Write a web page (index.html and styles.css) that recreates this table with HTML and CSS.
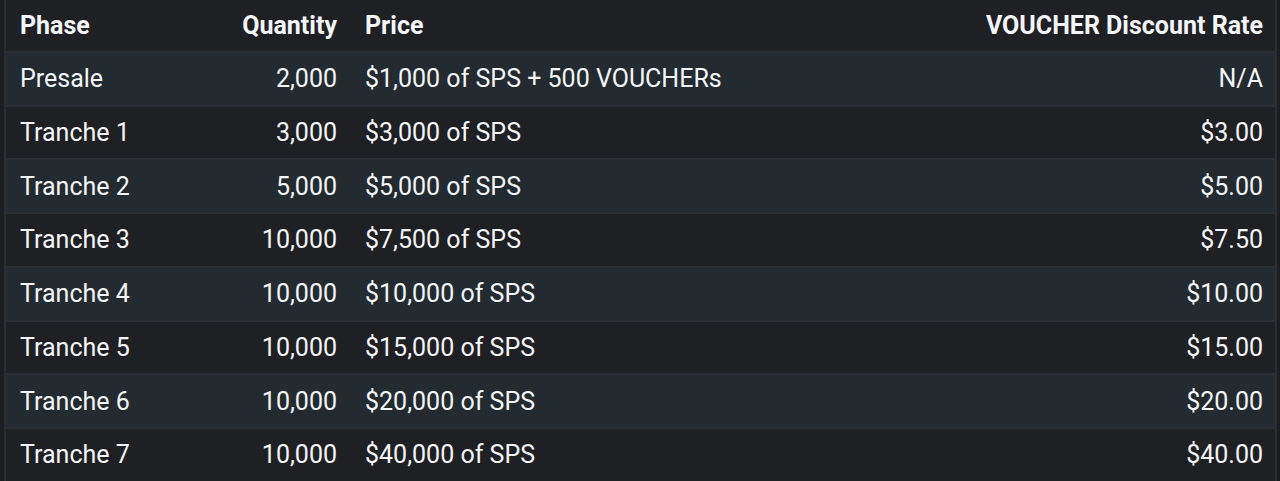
FILE: index.html
```html
<!DOCTYPE html>
<html lang="en">
<head>
<meta charset="utf-8">
<title>Phases</title>
<link rel="stylesheet" href="styles.css">
</head>
<body>
<div class="wrap">
<table class="phases">
<colgroup><col class="c1"><col class="c2"><col class="c3"><col class="c4"></colgroup>
<thead>
<tr><th class="l">Phase</th><th class="r">Quantity</th><th class="l">Price</th><th class="r">VOUCHER Discount Rate</th></tr>
</thead>
<tbody>
<tr class="alt"><td class="l">Presale</td><td class="r">2,000</td><td class="l">$1,000 of SPS + 500 VOUCHERs</td><td class="r">N/A</td></tr>
<tr><td class="l">Tranche 1</td><td class="r">3,000</td><td class="l">$3,000 of SPS</td><td class="r">$3.00</td></tr>
<tr class="alt"><td class="l">Tranche 2</td><td class="r">5,000</td><td class="l">$5,000 of SPS</td><td class="r">$5.00</td></tr>
<tr><td class="l">Tranche 3</td><td class="r">10,000</td><td class="l">$7,500 of SPS</td><td class="r">$7.50</td></tr>
<tr class="alt"><td class="l">Tranche 4</td><td class="r">10,000</td><td class="l">$10,000 of SPS</td><td class="r">$10.00</td></tr>
<tr><td class="l">Tranche 5</td><td class="r">10,000</td><td class="l">$15,000 of SPS</td><td class="r">$15.00</td></tr>
<tr class="alt"><td class="l">Tranche 6</td><td class="r">10,000</td><td class="l">$20,000 of SPS</td><td class="r">$20.00</td></tr>
<tr><td class="l">Tranche 7</td><td class="r">10,000</td><td class="l">$40,000 of SPS</td><td class="r">$40.00</td></tr>
</tbody>
</table>
</div>
</body>
</html>
```
FILE: styles.css
```css
html, body {
  margin: 0;
  padding: 0;
  background: #1c1d21;
  height: 481px;
  overflow: hidden;
}
.wrap {
  padding: 0 3px 0 4px;
  margin-top: -2px;
}
.phases {
  width: 100%;
  table-layout: fixed;
  border-collapse: collapse;
  border-left: 2px solid #2a2d32;
  border-right: 2px solid #2a2d32;
  font-family: Roboto, "Liberation Sans", sans-serif;
  font-size: 25px;
  color: #f4f5f6;
  background: #1f2024;
}
.phases .c1 { width: 191px; }
.phases .c2 { width: 155px; }
.phases .c4 { width: 360px; }
.phases th, .phases td {
  height: 53.75px;
  padding: 0 14px;
  border-bottom: 2px solid #2a2d32;
  white-space: nowrap;
  vertical-align: middle;
  box-sizing: border-box;
}
.phases th {
  font-weight: 700;
  padding-top: 2px;
  background: #1f2024;
}
.phases th:last-child, .phases td:last-child {
  padding-right: 12px;
}
.phases td {
  font-weight: 400;
}
.phases .l { text-align: left; }
.phases .r { text-align: right; }
.phases tr.alt td { background: #232b30; }
```
